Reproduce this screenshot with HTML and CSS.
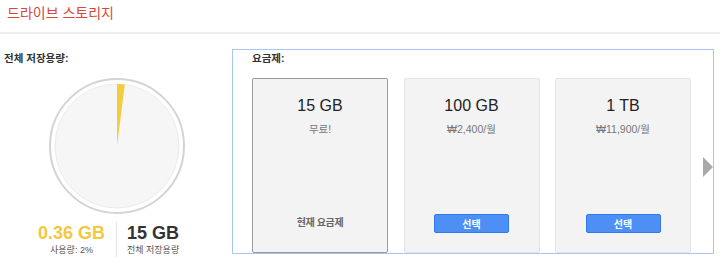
FILE: index.html
```html
<!DOCTYPE html>
<html lang="ko">
<head>
  <meta charset="UTF-8" />
  <title>드라이브 스토리지</title>
  <link rel="stylesheet" href="styles.css">
</head>
<body>
  <div class="topbar">드라이브 스토리지</div>
  <div class="content">
    <div class="usage">
      <h2>전체 저장용량:</h2>
      <svg class="pie" width="140" height="140" viewBox="0 0 140 140">
        <circle cx="70" cy="70" r="67" fill="#fff" stroke="#d4d4d4" stroke-width="2"/>
        <circle cx="70" cy="70" r="62" fill="#f6f6f6" stroke="#ebebeb" stroke-width="1"/>
        <path d="M70 70 L70 8 A62 62 0 0 1 77.8 8.5 Z" fill="#f4cd3c"/>
      </svg>
      <div class="legend">
        <div class="half left">
          <div class="stat used">
            <div class="num">0.36 GB</div>
            <div class="label">사용량: 2%</div>
          </div>
        </div>
        <div class="half">
          <div class="stat total">
            <div class="num">15 GB</div>
            <div class="label">전체 저장용량</div>
          </div>
        </div>
      </div>
    </div>
    <div class="plans">
      <h2>요금제:</h2>
      <div class="cards">
        <div class="card current">
          <div class="size">15 GB</div>
          <div class="price">무료!</div>
          <div class="spacer"></div>
          <div class="now">현재 요금제</div>
        </div>
        <div class="card">
          <div class="size">100 GB</div>
          <div class="price">₩2,400/월</div>
          <div class="spacer"></div>
          <button class="pick">선택</button>
        </div>
        <div class="card">
          <div class="size">1 TB</div>
          <div class="price">₩11,900/월</div>
          <div class="spacer"></div>
          <button class="pick">선택</button>
        </div>
      </div>
      <div class="next"></div>
    </div>
  </div>
</body>
</html>
```

FILE: styles.css
```css
body {
  margin: 0;
  font-family: "Liberation Sans", "Noto Sans CJK KR", sans-serif;
  color: #222;
  background: white;
}
.topbar {
  height: 32px;
  line-height: 26px;
  padding-left: 7px;
  font-size: 14px;
  color: #d9463a;
  border-bottom: 2px solid #eeeeee;
}
.content {
  display: flex;
  margin-top: 15px;
}
h2 {
  font-size: 10.5px;
  font-weight: bold;
  line-height: 14px;
  margin: 0;
  color: #333;
}
.usage {
  width: 232px;
  padding-top: 2px;
  box-sizing: border-box;
}
.usage h2 {
  padding-left: 4px;
}
.pie {
  display: block;
  margin: 11px auto 0 47px;
}
.legend {
  display: grid;
  grid-template-columns: 117px 1fr;
  margin-top: 6px;
}
.half.left {
  display: flex;
  justify-content: flex-end;
  border-right: 1px solid #e6e6e6;
}
.stat {
  text-align: center;
}
.stat.used {
  padding-right: 11px;
}
.stat.total {
  padding-left: 10px;
  display: inline-block;
}
.num {
  font-size: 18px;
  font-weight: bold;
  line-height: 22px;
}
.used .num {
  color: #f4c73e;
}
.total .num {
  color: #333;
}
.label {
  font-size: 9px;
  line-height: 12px;
  color: #555;
}
.plans {
  position: relative;
  width: 482px;
  height: 205px;
  box-sizing: border-box;
  border: 1px solid #a8c6f4;
  padding: 1px 0 0 19px;
}
.cards {
  display: flex;
  gap: 15.5px;
  margin-top: 13px;
}
.card {
  width: 136px;
  height: 175px;
  box-sizing: border-box;
  display: flex;
  flex-direction: column;
  align-items: center;
  padding: 17px 0 19px;
  background: #f3f3f3;
  border: 1px solid #e4e4e4;
  border-radius: 2px;
}
.card.current {
  border-color: #9a9a9a;
}
.size {
  font-size: 16px;
  line-height: 20px;
  color: #222;
}
.price {
  margin-top: 6px;
  font-size: 10.5px;
  line-height: 14px;
  color: #777;
}
.spacer {
  flex: 1;
}
.now {
  font-size: 10px;
  font-weight: bold;
  line-height: 14px;
  letter-spacing: -0.4px;
  color: #666;
  margin-bottom: 3px;
}
.pick {
  width: 75px;
  height: 19px;
  padding: 0;
  font-family: inherit;
  font-size: 10px;
  font-weight: bold;
  color: white;
  background: #4d8ff5;
  border: 1px solid #3079ed;
  border-radius: 2px;
}
.next {
  position: absolute;
  right: 0;
  top: 107px;
  width: 0;
  height: 0;
  border-left: 10px solid #a9a9a9;
  border-top: 10px solid transparent;
  border-bottom: 10px solid transparent;
}
```
